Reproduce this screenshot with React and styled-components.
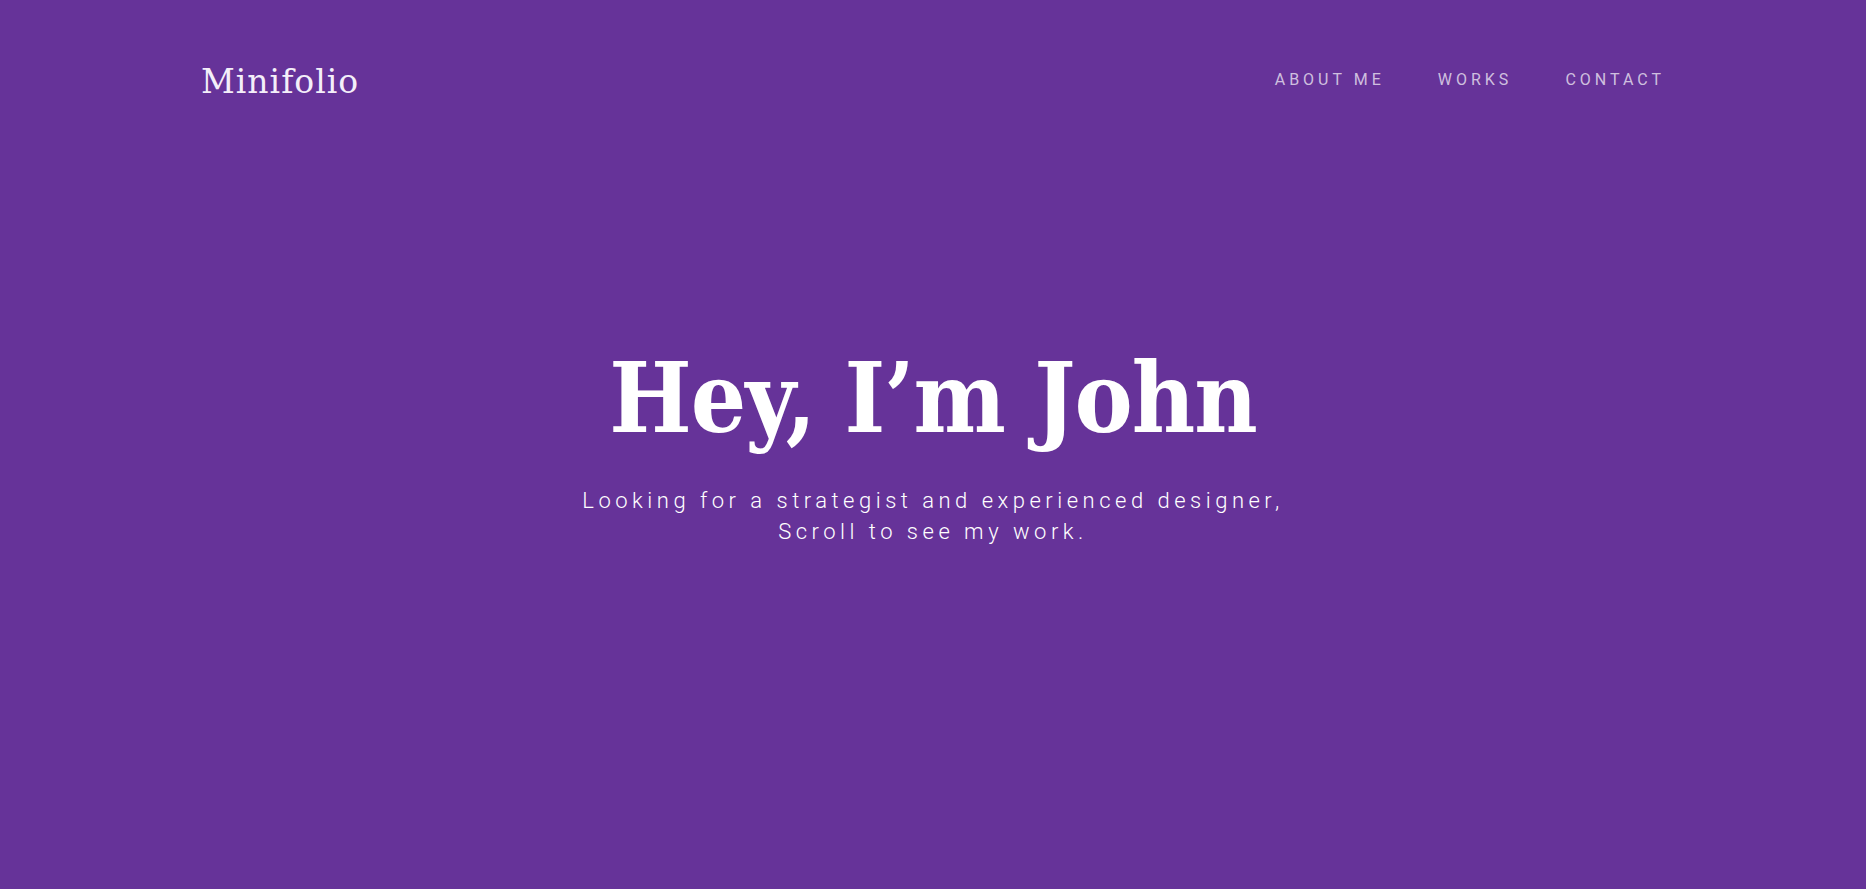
import styled, { createGlobalStyle } from "styled-components";

const GlobalStyle = createGlobalStyle`
  html, body {
    margin: 0;
    padding: 0;
    background: #663399;
  }
  * {
    box-sizing: border-box;
  }
`;

const navLinks = ["About me", "Works", "Contact"];

const App = () => {
  return (
    <>
      <GlobalStyle />
      <Page>
        <Header>
          <Logo href="#">Minifolio</Logo>
          <Nav>
            {navLinks.map((link) => (
              <NavLink key={link} href="#">
                {link}
              </NavLink>
            ))}
          </Nav>
        </Header>
        <Hero>
          <Title>Hey, I’m John</Title>
          <Subtitle>
            Looking for a strategist and experienced designer,
            <br />
            Scroll to see my work.
          </Subtitle>
        </Hero>
      </Page>
    </>
  );
};

export default App;

const Page = styled.div`
  min-height: 100vh;
  background: #663399;
  color: #fff;
`;

const Header = styled.header`
  display: flex;
  justify-content: space-between;
  align-items: flex-start;
  width: 1464px;
  margin: 0 auto;
  padding-top: 63px;
`;

const Logo = styled.a`
  font-family: "DejaVu Serif", serif;
  font-size: 33px;
  font-weight: 400;
  line-height: 38px;
  letter-spacing: 1px;
  color: #f4eff9;
  text-decoration: none;
`;

const Nav = styled.nav`
  display: flex;
  gap: 53px;
  margin-top: 7px;
`;

const NavLink = styled.a`
  font-family: Roboto, "Liberation Sans", sans-serif;
  font-size: 16px;
  font-weight: 400;
  line-height: 19px;
  letter-spacing: 4px;
  text-transform: uppercase;
  text-decoration: none;
  color: rgba(255, 255, 255, 0.7);
`;

const Hero = styled.section`
  display: flex;
  flex-direction: column;
  align-items: center;
  margin-top: 249px;
  text-align: center;
`;

const Title = styled.h1`
  margin: 0;
  font-family: "DejaVu Serif", serif;
  font-size: 97px;
  font-weight: 700;
  font-stretch: semi-condensed;
  letter-spacing: -1px;
  line-height: 97px;
  color: #fff;
`;

const Subtitle = styled.p`
  margin: 38px 0 0;
  font-family: Roboto, "Liberation Sans", sans-serif;
  font-size: 22px;
  font-weight: 300;
  line-height: 31px;
  letter-spacing: 4.5px;
  color: #fff;
`;
